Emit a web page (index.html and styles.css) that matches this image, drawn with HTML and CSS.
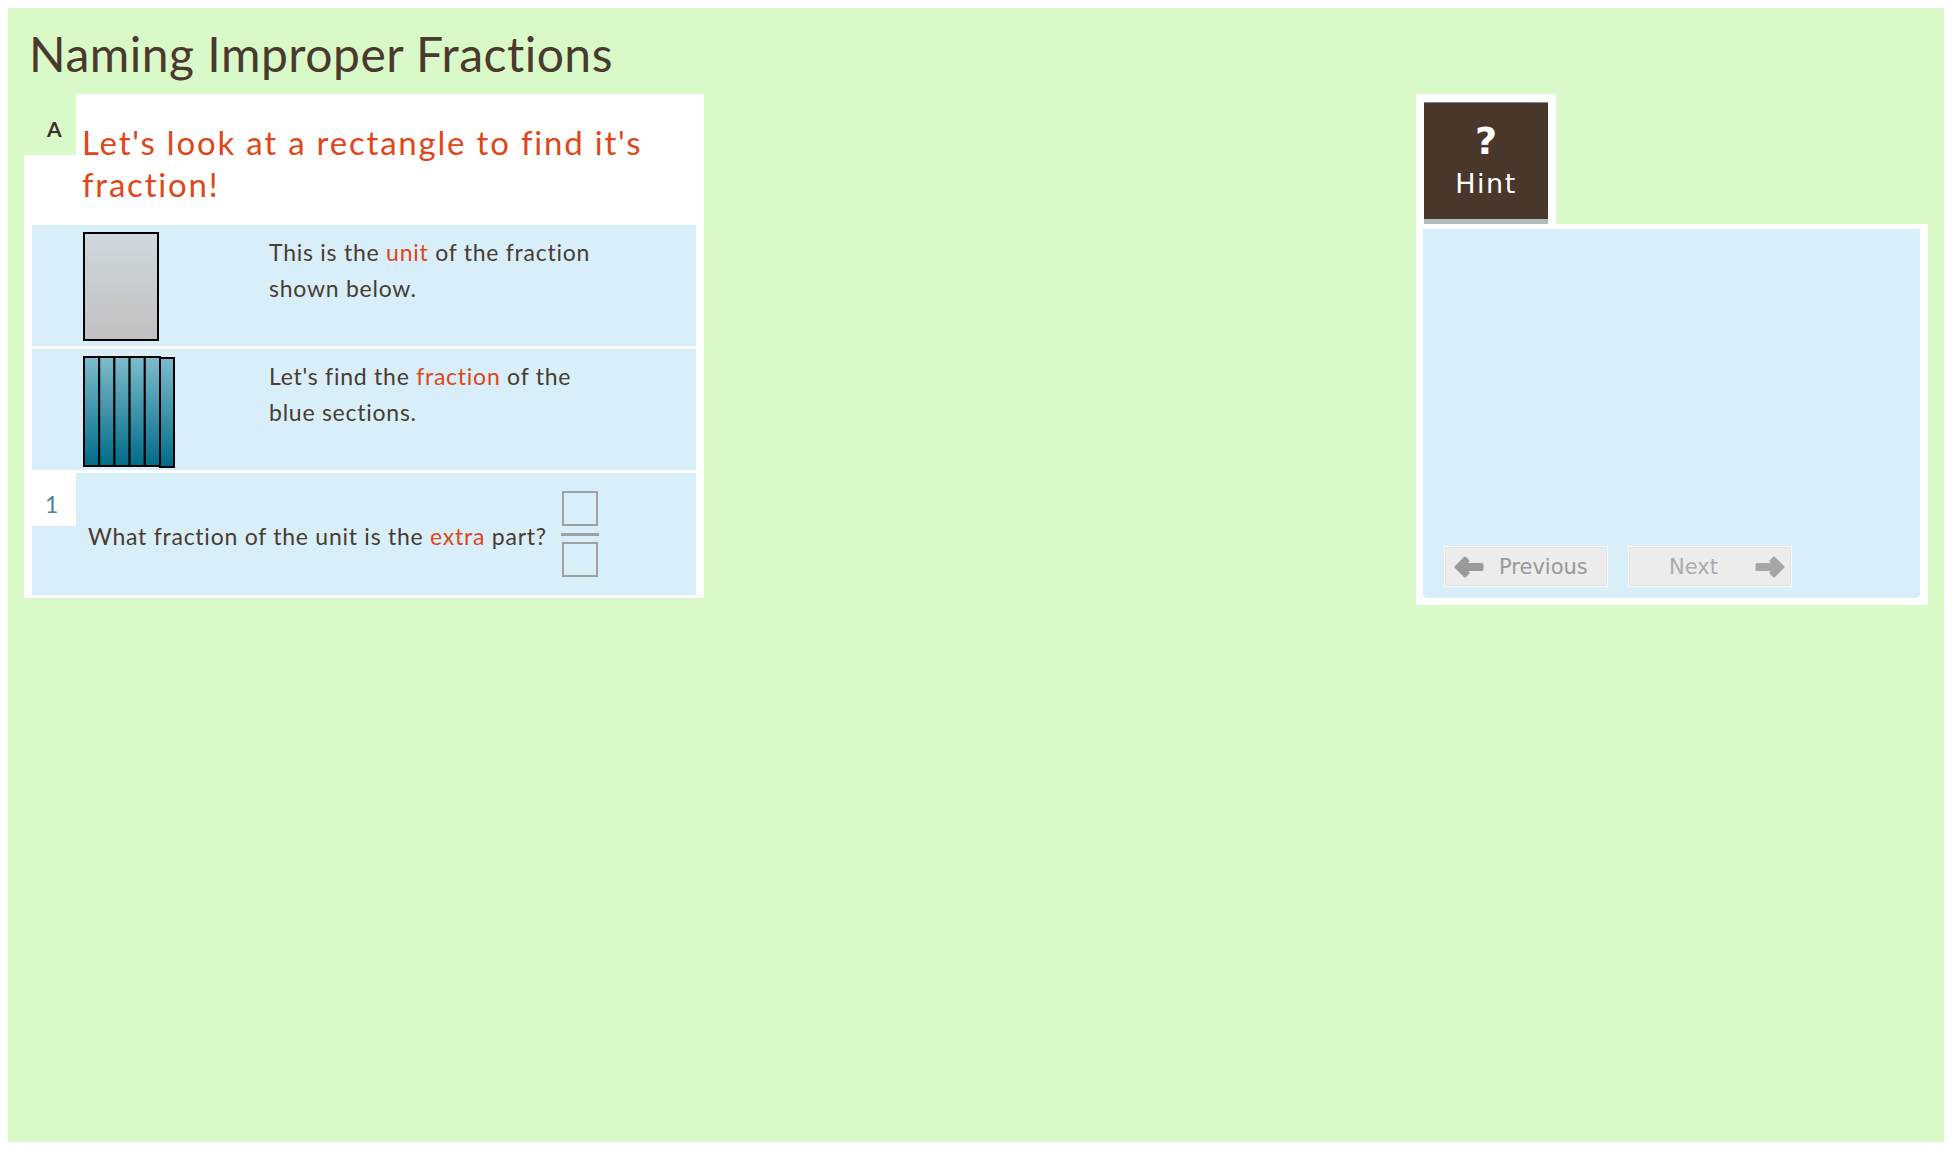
FILE: index.html
```html
<!DOCTYPE html>
<html lang="en">
<head>
<meta charset="utf-8">
<title>Naming Improper Fractions</title>
<link rel="stylesheet" href="styles.css">
</head>
<body>
<div class="page">
  <h1 class="title">Naming Improper Fractions</h1>
  <div class="main">
    <section class="card">
      <div class="card-head">
        <div class="label">A</div>
        <h2 class="heading">Let's look at a rectangle to find it's fraction!</h2>
      </div>
      <div class="row">
        <div class="unit"></div>
        <p class="text">This is the <span class="hl">unit</span> of the fraction shown below.</p>
      </div>
      <div class="row">
        <svg class="bars" width="92" height="112" viewBox="0 0 92 112">
          <defs>
            <linearGradient id="blue" x1="0" y1="0" x2="0" y2="1">
              <stop offset="0" stop-color="#7dbccd"/>
              <stop offset="1" stop-color="#006b88"/>
            </linearGradient>
          </defs>
          <rect x="77" y="2" width="14" height="109" fill="url(#blue)" stroke="#000" stroke-width="2"/>
          <rect x="1" y="1" width="15.2" height="109" fill="url(#blue)" stroke="#000" stroke-width="2"/>
          <rect x="16.2" y="1" width="15.2" height="109" fill="url(#blue)" stroke="#000" stroke-width="2"/>
          <rect x="31.4" y="1" width="15.2" height="109" fill="url(#blue)" stroke="#000" stroke-width="2"/>
          <rect x="46.6" y="1" width="15.2" height="109" fill="url(#blue)" stroke="#000" stroke-width="2"/>
          <rect x="61.8" y="1" width="15.2" height="109" fill="url(#blue)" stroke="#000" stroke-width="2"/>
        </svg>
        <p class="text">Let's find the <span class="hl">fraction</span> of the blue sections.</p>
      </div>
      <div class="row row-q">
        <div class="num">1</div>
        <div class="question">
          <span class="q-text">What fraction of the unit is the <span class="hl">extra</span> part?</span>
          <span class="frac"><span class="box"></span><span class="frac-line"></span><span class="box"></span></span>
        </div>
      </div>
    </section>
    <aside class="hint">
      <div class="tab">
        <button class="hint-btn" type="button"><span class="qmark">?</span><span class="hint-word">Hint</span></button>
      </div>
      <div class="panel">
        <div class="panel-inner">
          <div class="nav">
            <button class="nav-btn prev" type="button">
              <svg class="arrow" width="32" height="24" viewBox="0 0 32 24"><path d="M3 12 L12 3 L15 6 L11 9.5 L29 9.5 L29 14.5 L11 14.5 L15 18 L12 21 Z" fill="#9a9a9a" stroke="#9a9a9a" stroke-width="3" stroke-linejoin="round"/></svg>
              <span>Previous</span>
            </button>
            <button class="nav-btn next" type="button">
              <span>Next</span>
              <svg class="arrow" width="32" height="24" viewBox="0 0 32 24"><path d="M29 12 L20 3 L17 6 L21 9.5 L3 9.5 L3 14.5 L21 14.5 L17 18 L20 21 Z" fill="#a6a6a6" stroke="#a6a6a6" stroke-width="3" stroke-linejoin="round"/></svg>
            </button>
          </div>
        </div>
      </div>
    </aside>
  </div>
</div>
</body>
</html>
```

FILE: styles.css
```css
html, body {
  margin: 0;
  padding: 0;
}
body {
  margin: 8px;
  background: #ffffff;
  font-family: Lato, "Open Sans", sans-serif;
  color: #4a3b33;
}
.page {
  background: #d9f9c8;
  min-height: 1134px;
  padding: 0 16px;
  box-sizing: border-box;
}
.title {
  margin: 0;
  padding: 17px 0 12px 5px;
  font-family: Lato, sans-serif;
  font-weight: 400;
  font-size: 48px;
  line-height: 57px;
  letter-spacing: 0.5px;
  color: #4a3a2e;
}
.main {
  display: flex;
  justify-content: space-between;
  align-items: flex-start;
}
.card {
  width: 680px;
  background: #ffffff;
  padding: 0 8px 3px 8px;
  box-sizing: border-box;
}
.card-head {
  display: flex;
  align-items: flex-start;
  margin: 0 -8px 20px -8px;
}
.label {
  flex: none;
  width: 52px;
  height: 61px;
  box-sizing: border-box;
  background: #d9f9c8;
  padding: 23px 0 0 23px;
  font-size: 21px;
  line-height: 24px;
  font-weight: 700;
  color: #3d3129;
}
.heading {
  margin: 0;
  padding: 27px 20px 0 6px;
  font-size: 33px;
  line-height: 42px;
  letter-spacing: 1.8px;
  font-weight: 400;
  color: #df4619;
}
.hl {
  color: #df4619;
}
.row {
  display: grid;
  grid-template-columns: 186px 342px;
  align-items: start;
  background: #d8eff9;
  height: 121px;
  box-sizing: border-box;
  padding: 7px 0 0 51px;
  margin-top: 3px;
}
.card-head + .row {
  margin-top: 0;
}
.unit {
  width: 76px;
  height: 109px;
  box-sizing: border-box;
  border: 2px solid #000;
  background: linear-gradient(#cfd9df, #c0c0c0);
}
.bars {
  display: block;
}
.text {
  margin: 2px 0 0 0;
  font-size: 23px;
  line-height: 36px;
  letter-spacing: 0.75px;
}
.row-q {
  display: flex;
  align-items: stretch;
  padding: 0;
  height: 122px;
}
.num {
  flex: none;
  width: 44px;
  height: 53px;
  box-sizing: border-box;
  background: #ffffff;
  padding: 18px 0 0 13px;
  font-size: 23px;
  line-height: 26px;
  color: #4a7d9e;
}
.question {
  flex: 1;
  display: flex;
  align-items: center;
  padding: 4px 0 0 12px;
  font-size: 23px;
  line-height: 36px;
  letter-spacing: 0.75px;
}
.frac {
  display: inline-flex;
  flex-direction: column;
  align-items: center;
  margin: -4px 0 0 14px;
  width: 38px;
}
.box {
  width: 36px;
  height: 35px;
  box-sizing: border-box;
  border: 2px solid #a0a0a0;
}
.frac-line {
  width: 38px;
  height: 3px;
  background: #a0a0a0;
  margin: 7px 0 6px 0;
}
.hint {
  width: 512px;
  display: flex;
  flex-direction: column;
  align-items: flex-start;
}
.tab {
  background: #ffffff;
  padding: 8px 8px 0 8px;
}
.hint-btn {
  display: flex;
  flex-direction: column;
  align-items: center;
  width: 124px;
  height: 122px;
  box-sizing: border-box;
  margin: 0;
  padding: 20px 0 0 0;
  border: 0;
  border-top: 1px solid #7f8d93;
  border-bottom: 5px solid #b1babe;
  background: #4a372c;
  color: #ffffff;
  font-family: "DejaVu Sans", Verdana, sans-serif;
  cursor: pointer;
}
.qmark {
  font-size: 38px;
  line-height: 36px;
  font-weight: 700;
}
.hint-word {
  margin-top: 10px;
  font-size: 27px;
  line-height: 30px;
  letter-spacing: 1.5px;
}
.panel {
  width: 512px;
  box-sizing: border-box;
  background: #ffffff;
  padding: 5px 8px 7px 7px;
}
.panel-inner {
  height: 369px;
  background: #d8eff9;
  border-radius: 0 0 4px 4px;
  display: flex;
  flex-direction: column;
  justify-content: flex-end;
  padding: 0 20px 11px 21px;
  box-sizing: border-box;
}
.nav {
  display: flex;
  gap: 20px;
}
.nav-btn {
  display: flex;
  align-items: center;
  width: 164px;
  height: 41px;
  box-sizing: border-box;
  margin: 0;
  background: #ececec;
  border: 1px solid #f7f7f7;
  box-shadow: inset 0 0 0 1px #e3e3e3;
  font-family: "DejaVu Sans", Verdana, sans-serif;
  font-size: 21px;
  line-height: 24px;
  cursor: pointer;
}
.prev {
  padding: 0 0 0 8px;
  color: #999999;
}
.prev .arrow {
  margin-right: 14px;
}
.next {
  padding: 0 5px 0 40px;
  color: #ababab;
}
.next .arrow {
  margin-left: auto;
}
.arrow {
  display: block;
  flex: none;
}
```
